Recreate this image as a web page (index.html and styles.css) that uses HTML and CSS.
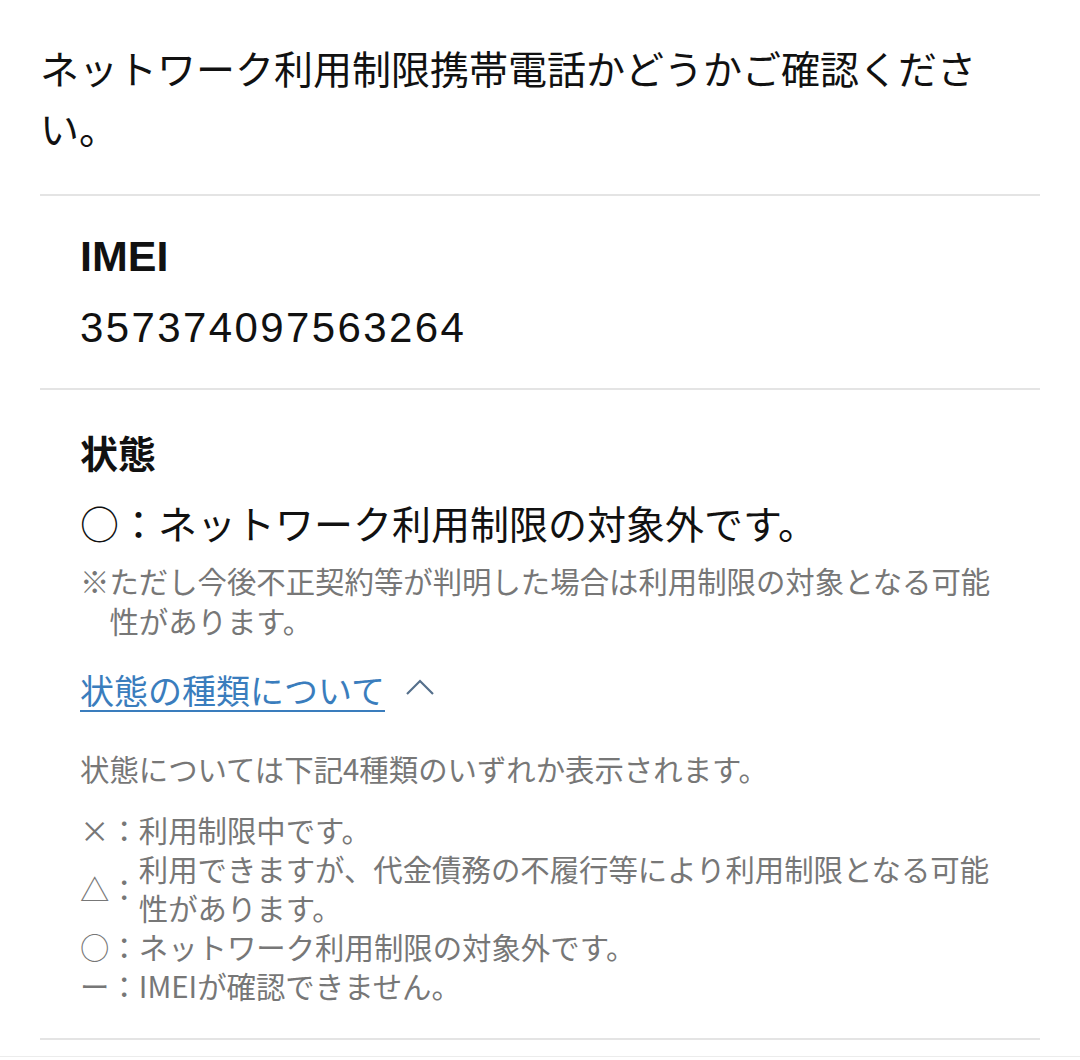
FILE: index.html
```html
<!DOCTYPE html>
<html lang="ja">
<head>
<meta charset="utf-8">
<link rel="stylesheet" href="styles.css">
</head>
<body>
<div class="page">
  <p class="intro">ネットワーク利用制限携帯電話かどうかご確認ください。</p>
  <section class="block imei">
    <h2 class="label-en">IMEI</h2>
    <p class="number">357374097563264</p>
  </section>
  <section class="block status">
    <h2 class="label-ja">状態</h2>
    <p class="result">○：ネットワーク利用制限の対象外です。</p>
    <p class="note">※ただし今後不正契約等が判明した場合は利用制限の対象となる可能性があります。</p>
    <div class="toggle">
      <a class="link" href="#">状態の種類について</a>
      <svg class="chev" width="32" height="22" viewBox="0 0 32 22"><polyline points="2,18 15,5 28,18" fill="none" stroke="#56708c" stroke-width="2.2"/></svg>
    </div>
    <p class="desc">状態については下記4種類のいずれか表示されます。</p>
    <ul class="legend">
      <li class="item"><span class="mark">×</span><span class="colon">：</span><span class="text">利用制限中です。</span></li>
      <li class="item"><span class="mark">△</span><span class="colon">：</span><span class="text">利用できますが、代金債務の不履行等により利用制限となる可能性があります。</span></li>
      <li class="item"><span class="mark">○</span><span class="colon">：</span><span class="text">ネットワーク利用制限の対象外です。</span></li>
      <li class="item"><span class="mark">ー</span><span class="colon">：</span><span class="text">IMEIが確認できません。</span></li>
    </ul>
  </section>
  <div class="foot"></div>
</div>
</body>
</html>
```

FILE: styles.css
```css
html, body {
  margin: 0;
  padding: 0;
  background: #ffffff;
}
body {
  font-family: "Noto Sans CJK JP", "Noto Sans", sans-serif;
  color: #111111;
}
.page {
  padding: 0 40px;
  width: 1000px;
}
p, h2, ul {
  margin: 0;
  padding: 0;
}
.intro {
  font-size: 39px;
  line-height: 60px;
  padding-top: 37px;
  padding-bottom: 37px;
  border-bottom: 2px solid #e4e4e4;
}
.block {
  padding-left: 40px;
  padding-right: 40px;
  border-bottom: 2px solid #e4e4e4;
}
.imei {
  padding-top: 32px;
  padding-bottom: 32px;
}
.label-en {
  font-family: "Liberation Sans", Arial, sans-serif;
  font-weight: bold;
  font-size: 43px;
  line-height: 56px;
}
.number {
  font-family: "Liberation Sans", Arial, sans-serif;
  font-size: 42px;
  letter-spacing: 2.4px;
  line-height: 56px;
  margin-top: 16px;
}
.status {
  padding-top: 34px;
  padding-bottom: 33px;
}
.label-ja {
  font-size: 38px;
  font-weight: bold;
  line-height: 56px;
}
.result {
  font-size: 39px;
  line-height: 56px;
  margin-top: 14px;
}
.note {
  font-size: 29.4px;
  line-height: 40px;
  color: #777777;
  margin-top: 10px;
  padding-left: 1em;
  text-indent: -1em;
}
.toggle {
  display: flex;
  align-items: center;
  gap: 20px;
  margin-top: 25px;
  height: 50px;
}
.link {
  font-size: 34px;
  line-height: 50px;
  color: #3a7dbd;
  text-decoration: underline;
  text-decoration-thickness: 2px;
  text-underline-offset: 6px;
}
.chev {
  display: block;
  margin-top: -6px;
}
.desc {
  font-size: 29.4px;
  line-height: 40px;
  color: #777777;
  margin-top: 33px;
}
.legend {
  list-style: none;
  margin-top: 22px;
  color: #777777;
  font-size: 29.4px;
  line-height: 39px;
}
.item {
  display: flex;
  align-items: center;
}
.mark {
  flex: 0 0 1em;
  width: 1em;
  text-align: center;
}
.colon {
  flex: 0 0 1em;
  width: 1em;
}
.text {
  flex: 1;
}
.foot {
  margin: 16px -40px 0;
  height: 1px;
  background: #ececec;
}
```
